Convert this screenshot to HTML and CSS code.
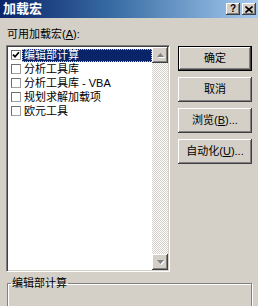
FILE: index.html
```html
<!DOCTYPE html>
<html lang="zh-CN">
<head>
<meta charset="utf-8">
<title>加载宏</title>
<link rel="stylesheet" href="styles.css">
</head>
<body>
<div class="window">
  <div class="titlebar">
    <span class="title">加载宏</span>
    <div class="title-buttons">
      <span class="tbtn help">?</span>
      <span class="tbtn close"><svg width="8" height="7" viewBox="0 0 8 7"><path d="M0.5 0.5 L7.5 6.5 M7.5 0.5 L0.5 6.5" stroke="#000" stroke-width="1.6" fill="none"/></svg></span>
    </div>
  </div>
  <div class="content">
    <div class="main">
      <div class="left">
        <div class="label">可用加载宏(<u>A</u>):</div>
        <div class="listbox">
          <ul class="items">
            <li class="item selected"><span class="check checked"><svg width="8" height="8" viewBox="0 0 8 8"><path d="M1 3.6 L3 5.8 L7 1.2" stroke="#000" stroke-width="1.7" fill="none"/></svg></span><span class="text">编辑部计算</span></li>
            <li class="item"><span class="check"></span><span class="text">分析工具库</span></li>
            <li class="item"><span class="check"></span><span class="text">分析工具库 - VBA</span></li>
            <li class="item"><span class="check"></span><span class="text">规划求解加载项</span></li>
            <li class="item"><span class="check"></span><span class="text">欧元工具</span></li>
          </ul>
          <div class="scrollbar">
            <div class="sbtn"><svg width="7" height="5" viewBox="0 0 7 5"><polygon points="3.5,0 7,4 0,4" fill="#808080"/></svg></div>
            <div class="track"></div>
            <div class="sbtn"><svg width="7" height="5" viewBox="0 0 7 5"><polygon points="0,0 7,0 3.5,4" fill="#808080"/></svg></div>
          </div>
        </div>
      </div>
      <div class="buttons">
        <div class="btn default">确定</div>
        <div class="btn">取消</div>
        <div class="btn">浏览(<u>B</u>)...</div>
        <div class="btn">自动化(<u>U</u>)...</div>
      </div>
    </div>
    <fieldset class="group">
      <legend>编辑部计算</legend>
    </fieldset>
  </div>
</div>
</body>
</html>
```

FILE: styles.css
```css
html, body {
  margin: 0;
  padding: 0;
  background: #d4d0c8;
}
body {
  font-family: "Liberation Sans", "Noto Sans CJK SC", sans-serif;
  font-size: 11px;
  color: #000;
}
.window {
  width: 258px;
  height: 306px;
  overflow: hidden;
  background: #d4d0c8;
  display: flex;
  flex-direction: column;
}
.titlebar {
  height: 18px;
  flex: none;
  display: flex;
  align-items: center;
  justify-content: space-between;
  background: linear-gradient(to right, #0a246a 0%, #3a6ea5 45%, #a6caf0 100%);
}
.title {
  color: #fff;
  font-weight: bold;
  font-size: 13px;
  line-height: 18px;
  padding-left: 3px;
}
.title-buttons {
  display: flex;
  gap: 2px;
  margin-right: 2px;
}
.tbtn {
  width: 14px;
  height: 12px;
  box-sizing: border-box;
  background: #d4d0c8;
  box-shadow: inset -1px -1px #404040, inset 1px 1px #fff, inset -2px -2px #808080;
  display: flex;
  align-items: center;
  justify-content: center;
  font-family: "Liberation Sans", sans-serif;
  font-weight: bold;
  font-size: 10px;
  line-height: 12px;
}
.content {
  padding-top: 9px;
  display: flex;
  flex-direction: column;
}
.main {
  display: flex;
  gap: 8px;
  padding: 0 6px;
}
.left {
  width: 164px;
  display: flex;
  flex-direction: column;
}
.label {
  line-height: 14px;
  height: 14px;
  padding-left: 1px;
  margin-bottom: 4px;
}
u {
  text-decoration: underline;
  text-underline-offset: 1px;
}
.listbox {
  height: 227px;
  box-sizing: border-box;
  background: #fff;
  border-top: 1px solid #808080;
  border-left: 1px solid #808080;
  border-right: 1px solid #fff;
  border-bottom: 1px solid #fff;
  box-shadow: inset 1px 1px #404040, inset -1px -1px #d4d0c8;
  padding: 1px;
  display: flex;
}
.items {
  list-style: none;
  margin: 0;
  padding: 1px 0 0 0;
  flex: 1;
}
.item {
  height: 14px;
  display: flex;
  align-items: center;
  padding-left: 3px;
}
.check {
  width: 10px;
  height: 10px;
  box-sizing: border-box;
  border: 1px solid #6f6f6f;
  border-right-color: #a0a0a0;
  border-bottom-color: #a0a0a0;
  background: #fff;
  display: flex;
  align-items: center;
  justify-content: center;
  flex: none;
}
.text {
  margin-left: 1px;
  padding-left: 2px;
  line-height: 13px;
  height: 13px;
  white-space: nowrap;
}
.selected .text {
  flex: 1;
  background: #0a246a;
  color: #fff;
  outline: 1px dotted #c0c0c0;
  outline-offset: -1px;
}
.scrollbar {
  width: 16px;
  display: flex;
  flex-direction: column;
  flex: none;
}
.sbtn {
  width: 16px;
  height: 16px;
  box-sizing: border-box;
  background: #d4d0c8;
  box-shadow: inset -1px -1px #404040, inset 1px 1px #fff, inset -2px -2px #808080;
  display: flex;
  align-items: center;
  justify-content: center;
  flex: none;
}
.sbtn svg {
  filter: drop-shadow(1px 1px 0 #fff);
}
.track {
  flex: 1;
  background-color: #fff;
  background-image: repeating-conic-gradient(#d4d0c8 0 25%, #ffffff 0 50%);
  background-size: 2px 2px;
}
.buttons {
  width: 74px;
  padding-top: 19px;
  display: flex;
  flex-direction: column;
  gap: 6px;
}
.btn {
  height: 25px;
  box-sizing: border-box;
  background: #d4d0c8;
  box-shadow: inset -1px -1px #404040, inset 1px 1px #fff, inset -2px -2px #808080;
  display: flex;
  align-items: center;
  justify-content: center;
  line-height: 13px;
  white-space: nowrap;
}
.btn.default {
  border: 1px solid #000;
}
.group {
  margin: 5px 6px 0 7px;
  height: 40px;
  padding: 0;
  border: 1px solid #808080;
  box-shadow: 1px 1px 0 #fff, inset 1px 1px 0 #fff;
}
.group legend {
  margin-left: 3px;
  padding: 0 1px;
  line-height: 13px;
}
```
